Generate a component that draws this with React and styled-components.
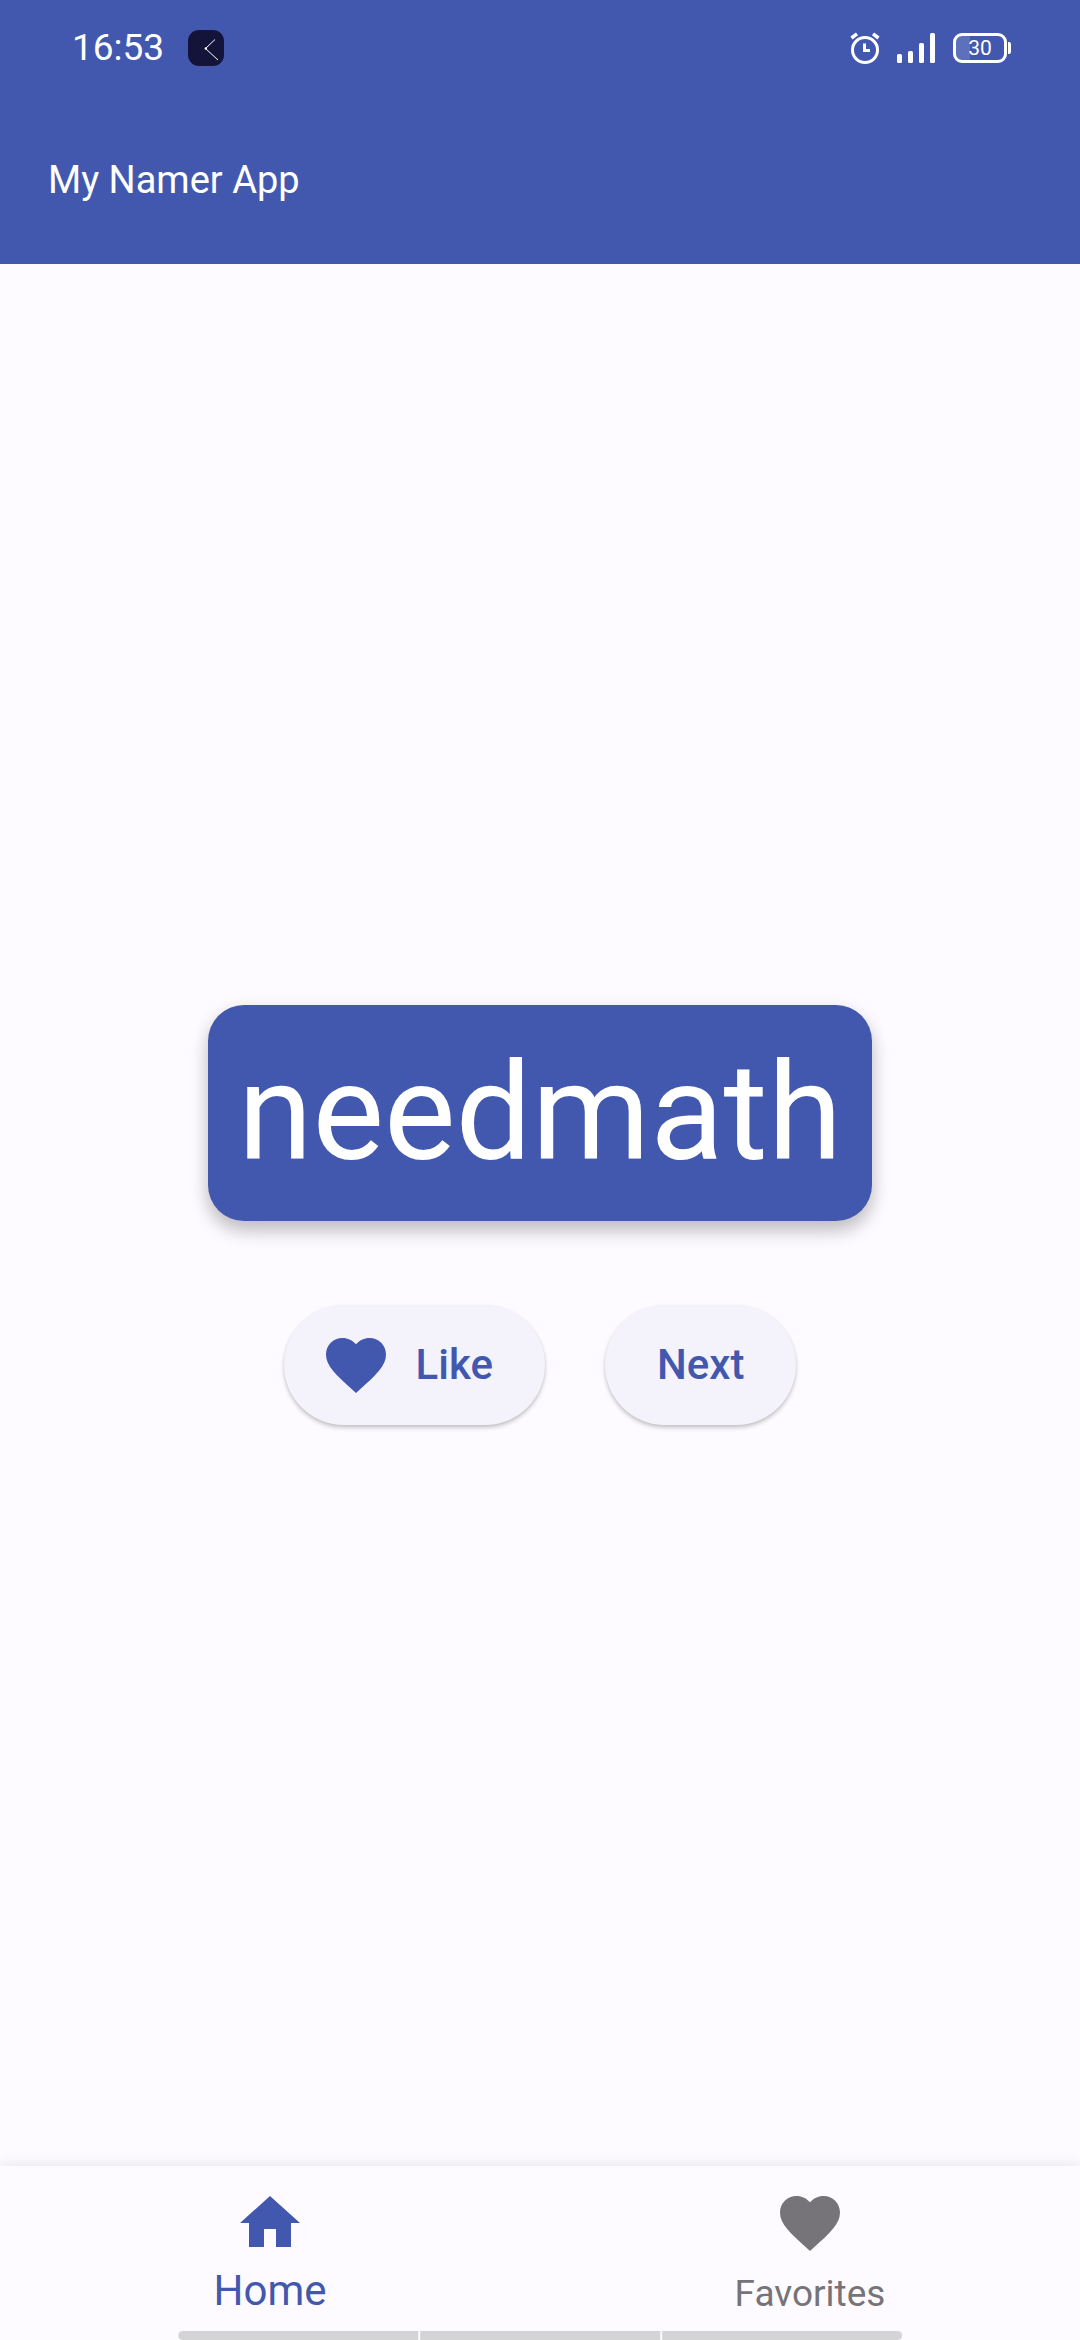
import React, { useState } from "react";
import styled, { createGlobalStyle, css } from "styled-components";

const color = {
  primary: "#4258AF",
  surface: "#FDFBFF",
  button: "#F4F2FB",
  muted: "#767478",
  white: "#FFFFFF",
};

const GlobalStyle = createGlobalStyle`
  *, *::before, *::after { box-sizing: border-box; }
  body {
    margin: 0;
    background: ${color.surface};
    font-family: Roboto, "Noto Sans", sans-serif;
  }
  button { font-family: inherit; border: 0; margin: 0; cursor: pointer; }
`;

const Screen = styled.div`
  display: flex;
  flex-direction: column;
  min-height: 100vh;
  background: ${color.surface};
`;

const Header = styled.header`
  background: ${color.primary};
  color: ${color.white};
`;

const StatusBar = styled.div`
  display: flex;
  align-items: center;
  justify-content: space-between;
  height: 96px;
  padding: 0 69px 0 72px;
`;

const StatusGroup = styled.div`
  display: flex;
  align-items: center;
  gap: ${(p) => p.$gap}px;
`;

const Clock = styled.time`
  font-size: 37px;
  line-height: 48px;
`;

const Battery = styled.div`
  display: flex;
  align-items: center;
  gap: 1px;
  &::after {
    content: "";
    width: 3px;
    height: 12px;
    border-radius: 0 2px 2px 0;
    background: ${color.white};
  }
`;

const BatteryCell = styled.span`
  width: 54px;
  height: 30px;
  border: 3px solid ${color.white};
  border-radius: 9px;
  background: linear-gradient(90deg, #5c70bb 30%, transparent 30%);
  font-size: 21px;
  line-height: 24px;
  text-align: center;
`;

const AppBar = styled.div`
  display: flex;
  align-items: center;
  height: 168px;
  padding: 0 48px;
`;

const Title = styled.h1`
  margin: 0;
  font-size: 38px;
  font-weight: 400;
  line-height: 48px;
`;

const Main = styled.main`
  flex: 1;
  display: flex;
  flex-direction: column;
  align-items: center;
  justify-content: center;
  gap: 84px;
`;

const WordCard = styled.div`
  padding: 30px;
  border-radius: 36px;
  background: ${color.primary};
  color: ${color.white};
  font-size: 135px;
  line-height: 156px;
  box-shadow: 0 10px 18px rgba(0, 0, 0, 0.22), 0 4px 20px rgba(0, 0, 0, 0.06);
`;

const Actions = styled.div`
  display: flex;
  gap: 60px;
`;

const ActionButton = styled.button`
  display: flex;
  align-items: center;
  gap: 24px;
  height: 120px;
  padding: 0 52px 0 ${(p) => (p.$withIcon ? 36 : 52)}px;
  border-radius: 60px;
  background: ${color.button};
  color: ${color.primary};
  font-size: 42px;
  font-weight: 500;
  line-height: 48px;
  box-shadow: 0 3px 4px rgba(0, 0, 0, 0.18), 0 1px 3px rgba(0, 0, 0, 0.08);
`;

const Nav = styled.nav`
  position: relative;
  display: flex;
  height: 174px;
  background: ${color.surface};
  box-shadow: 0 -3px 12px rgba(0, 0, 0, 0.08);
`;

const NavItem = styled.button`
  flex: 1;
  display: flex;
  flex-direction: column;
  align-items: center;
  justify-content: space-between;
  padding: 21px 0 25px;
  background: none;
  color: ${color.muted};
  font-size: 37px;
  line-height: 42px;
  ${(p) =>
    p.$active &&
    css`
      color: ${color.primary};
      font-size: 42px;
      line-height: 48px;
    `}
`;

const GestureBar = styled.div`
  position: absolute;
  bottom: 0;
  left: 50%;
  display: flex;
  gap: 2px;
  width: 67%;
  height: 9px;
  transform: translateX(-50%);
  border-radius: 5px;
  overflow: hidden;
  pointer-events: none;
`;

const GestureSegment = styled.span`
  flex: 1;
  background: #d4d4d6;
`;

const Icon = styled.svg`
  display: block;
  flex: none;
  fill: currentColor;
`;

const HeartIcon = () => (
  <Icon width="72" height="72" viewBox="0 0 24 24" aria-hidden="true">
    <path d="M12 21.35l-1.45-1.32C5.4 15.36 2 12.28 2 8.5 2 5.42 4.42 3 7.5 3c1.74 0 3.41.81 4.5 2.09C13.09 3.81 14.76 3 16.5 3 19.58 3 22 5.42 22 8.5c0 3.78-3.4 6.86-8.55 11.54L12 21.35z" />
  </Icon>
);

const HomeIcon = () => (
  <Icon width="72" height="72" viewBox="0 0 24 24" aria-hidden="true">
    <path d="M10 20v-6h4v6h5v-8h3L12 3 2 12h3v8z" />
  </Icon>
);

const NoticeIcon = () => (
  <Icon width="36" height="36" viewBox="0 0 36 36" aria-hidden="true">
    <rect width="36" height="36" rx="11" fill="#14143A" />
    <path d="M27 9.5L17.5 18.5L30 30" fill="none" stroke="#fff" strokeWidth="1" />
    <circle cx="17.8" cy="18.5" r="1.2" fill="#fff" />
  </Icon>
);

const AlarmIcon = () => (
  <Icon width="30" height="32" viewBox="0 0 30 32" aria-hidden="true">
    <g fill="none" stroke="#fff">
      <circle cx="15" cy="18" r="12.5" strokeWidth="3" />
      <path d="M14.5 11.500V18.500H20" strokeWidth="3" />
      <path d="M1.500 6L7 1.800M28.500 6L23 1.800" strokeWidth="3.5" />
    </g>
  </Icon>
);

const SignalIcon = () => (
  <Icon width="39" height="30" viewBox="0 0 39 30" aria-hidden="true">
    <rect x="0" y="21" width="5" height="9" rx="1.5" />
    <rect x="11" y="18" width="5" height="12" rx="1.5" />
    <rect x="22" y="10" width="5" height="20" rx="1.5" />
    <rect x="33" y="0" width="5" height="30" rx="1.5" />
  </Icon>
);

export default function App() {
  const [tab, setTab] = useState("home");
  return (
    <Screen>
      <GlobalStyle />
      <Header>
        <StatusBar>
          <StatusGroup $gap={24}>
            <Clock>16:53</Clock>
            <NoticeIcon />
          </StatusGroup>
          <StatusGroup $gap={17}>
            <AlarmIcon />
            <SignalIcon />
            <Battery>
              <BatteryCell>30</BatteryCell>
            </Battery>
          </StatusGroup>
        </StatusBar>
        <AppBar>
          <Title>My Namer App</Title>
        </AppBar>
      </Header>
      <Main>
        <WordCard>needmath</WordCard>
        <Actions>
          <ActionButton type="button" $withIcon>
            <HeartIcon />
            Like
          </ActionButton>
          <ActionButton type="button">Next</ActionButton>
        </Actions>
      </Main>
      <Nav>
        <NavItem type="button" $active={tab === "home"} onClick={() => setTab("home")}>
          <HomeIcon />
          <span>Home</span>
        </NavItem>
        <NavItem type="button" $active={tab === "favorites"} onClick={() => setTab("favorites")}>
          <HeartIcon />
          <span>Favorites</span>
        </NavItem>
        <GestureBar>
          <GestureSegment />
          <GestureSegment />
          <GestureSegment />
        </GestureBar>
      </Nav>
    </Screen>
  );
}
